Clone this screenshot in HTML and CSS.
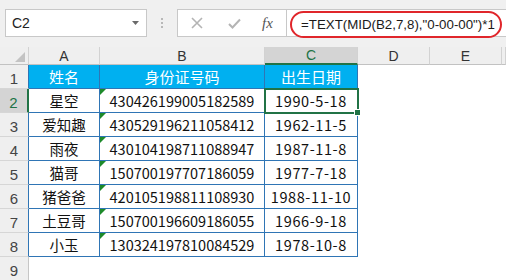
FILE: index.html
```html
<!DOCTYPE html>
<html lang="zh">
<head>
  <meta charset="UTF-8" />
  <title>身份证号提取出生日期</title>
  <link rel="stylesheet" href="styles.css">
</head>
<body>
  <!-- barre de formule -->
  <div class="toolbar">
    <div class="namebox">
      <span>C2</span>
      <svg class="caret" width="7" height="4" viewBox="0 0 7 4"><path d="M0 0H7L3.5 4Z" fill="#6a6a6a"/></svg>
    </div>
    <div class="grip"><i></i><i></i><i></i></div>
    <div class="fxbtns">
      <svg class="cancel" width="12" height="12" viewBox="0 0 12 12"><path d="M1 1L11 11M11 1L1 11" stroke="#b4b4b4" stroke-width="1.6"/></svg>
      <svg class="enter" width="13" height="11" viewBox="0 0 13 11"><path d="M1 6L4.5 9.5L12 1.5" stroke="#b4b4b4" stroke-width="2" fill="none"/></svg>
      <span class="fx">fx</span>
    </div>
    <div class="formula">
      <div class="oval">=TEXT(MID(B2,7,8),"0-00-00")*1</div>
    </div>
  </div>

  <!-- feuille -->
  <div class="sheet">
    <div class="ch corner"><svg width="10" height="10" viewBox="0 0 10 10"><path d="M10 0V10H0Z" fill="#c3c3c3"/></svg></div>
    <div class="ch">A</div>
    <div class="ch">B</div>
    <div class="ch sel">C</div>
    <div class="ch">D</div>
    <div class="ch">E</div>
    <div class="ch"></div>

    <div class="rh edge">1</div>
    <div class="c head">姓名</div>
    <div class="c head">身份证号码</div>
    <div class="c head">出生日期</div>
    <div class="e"></div><div class="e"></div><div class="e"></div>

    <div class="rh sel">2</div>
    <div class="c">星空</div>
    <div class="c txt">430426199005182589</div>
    <div class="c date active">1990-5-18</div>
    <div class="e"></div><div class="e"></div><div class="e"></div>

    <div class="rh edge">3</div>
    <div class="c">爱知趣</div>
    <div class="c txt">430529196211058412</div>
    <div class="c date">1962-11-5</div>
    <div class="e"></div><div class="e"></div><div class="e"></div>

    <div class="rh edge">4</div>
    <div class="c">雨夜</div>
    <div class="c txt">430104198711088947</div>
    <div class="c date">1987-11-8</div>
    <div class="e"></div><div class="e"></div><div class="e"></div>

    <div class="rh edge">5</div>
    <div class="c">猫哥</div>
    <div class="c txt">150700197707186059</div>
    <div class="c date">1977-7-18</div>
    <div class="e"></div><div class="e"></div><div class="e"></div>

    <div class="rh edge">6</div>
    <div class="c">猪爸爸</div>
    <div class="c txt">420105198811108930</div>
    <div class="c date">1988-11-10</div>
    <div class="e"></div><div class="e"></div><div class="e"></div>

    <div class="rh edge">7</div>
    <div class="c">土豆哥</div>
    <div class="c txt">150700196609186055</div>
    <div class="c date">1966-9-18</div>
    <div class="e"></div><div class="e"></div><div class="e"></div>

    <div class="rh edge">8</div>
    <div class="c">小玉</div>
    <div class="c txt">130324197810084529</div>
    <div class="c date">1978-10-8</div>
    <div class="e"></div><div class="e"></div><div class="e"></div>

    <div class="rh">9</div>
    <div class="e"></div><div class="e"></div><div class="e"></div>
    <div class="e"></div><div class="e"></div><div class="e"></div>
  </div>
</body>
</html>
```

FILE: styles.css
```css
body {
  margin: 0;
  background: #fff;
  font-family: "Noto Sans CJK SC", sans-serif;
  overflow: hidden;
  height: 280px;
}

/* barre du haut */
.toolbar {
  height: 47px;
  box-sizing: border-box;
  padding: 9px 0 0 5px;
  background: #f0f0f0;
  display: flex;
  align-items: flex-start;
}

.namebox {
  width: 142px;
  height: 28px;
  box-sizing: border-box;
  border: 1px solid #c8c8c8;
  background: #fff;
  display: flex;
  align-items: center;
  justify-content: space-between;
  padding: 0 7px 0 6px;
  font-family: "Liberation Sans", sans-serif;
  font-size: 14px;
  color: #222;
}

.grip {
  width: 2px;
  height: 28px;
  margin: 0 14px;
  display: flex;
  flex-direction: column;
  justify-content: center;
  gap: 2px;
}

.grip i {
  width: 2px;
  height: 2px;
  background: #b8b8b8;
}

.fxbtns {
  width: 110px;
  height: 28px;
  box-sizing: border-box;
  border: 1px solid #c8c8c8;
  background: #fff;
  display: flex;
  align-items: center;
}

.cancel { margin-left: 13px; }
.enter { margin-left: 25px; }

.fx {
  margin-left: 21px;
  font-family: "Liberation Serif", serif;
  font-style: italic;
  font-size: 15px;
  color: #555;
}

.formula {
  flex: 1;
  height: 28px;
  box-sizing: border-box;
  border: 1px solid #c8c8c8;
  border-left: none;
  border-right: none;
  background: #fff;
  display: flex;
  align-items: center;
  padding: 0 4px 0 3px;
}

.oval {
  flex: 1;
  height: 27px;
  box-sizing: border-box;
  border: 2px solid #e0262b;
  border-radius: 14px;
  padding-left: 9px;
  display: flex;
  align-items: center;
  font-family: "Liberation Sans", sans-serif;
  font-size: 13.3px;
  color: #1a1a1a;
  margin-top: 2px;
}

/* grille */
.sheet {
  display: grid;
  grid-template-columns: 29px 71px 165px 93px 72px 72px 1fr;
  grid-template-rows: 18px;
  grid-auto-rows: 24px;
}

.ch {
  background: #efefef;
  border-right: 1px solid #d2d2d2;
  border-bottom: 1px solid #c2c2c2;
  display: flex;
  align-items: center;
  justify-content: center;
  font-family: "Liberation Sans", sans-serif;
  font-size: 14px;
  color: #333;
}

.ch.corner {
  align-items: flex-end;
  justify-content: flex-end;
  padding: 0 3px 2px 0;
}

.ch.sel {
  background: #d4d4d4;
  color: #217346;
  border-bottom: 2px solid #217346;
}

.rh {
  background: #efefef;
  border-right: 1px solid #c6c6c6;
  border-bottom: 1px solid #d6d6d6;
  display: flex;
  align-items: center;
  justify-content: center;
  font-family: "Liberation Sans", sans-serif;
  font-size: 15px;
  color: #444;
  padding-top: 3px;
  box-sizing: border-box;
}

.rh.edge { border-right-color: #2f75b5; }

.rh.sel {
  background: #d4d4d4;
  color: #217346;
  border-right: 2px solid #217346;
}

.c {
  border-right: 1px solid #2f75b5;
  border-bottom: 1px solid #2f75b5;
  display: flex;
  align-items: center;
  justify-content: center;
  font-size: 14.5px;
  color: #111;
  position: relative;
}

.c.head {
  background: #00b0f0;
  color: #fff;
  font-size: 15px;
}

.c.date { letter-spacing: 0.6px; }

/* petit triangle vert : nombre stocké en texte */
.c.txt::before {
  content: "";
  position: absolute;
  top: 0;
  left: 0;
  border-top: 6px solid #1d8a2a;
  border-right: 6px solid transparent;
}

.c.active {
  outline: 2px solid #217346;
  outline-offset: -1px;
  z-index: 1;
}

.c.active::after {
  content: "";
  position: absolute;
  right: -4px;
  bottom: -4px;
  width: 5px;
  height: 5px;
  background: #217346;
  border: 1px solid #fff;
}

.e { background: #fff; }
```
